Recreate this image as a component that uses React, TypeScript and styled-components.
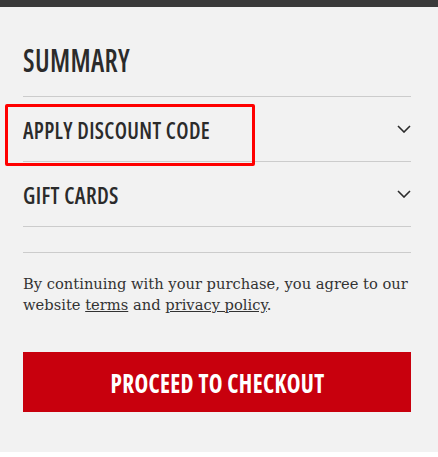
import React from "react";
import styled, { createGlobalStyle } from "styled-components";

const GlobalStyle = createGlobalStyle`
  html, body {
    margin: 0;
    padding: 0;
    background: #ffffff;
  }
`;

const condensed = `
  font-family: "Open Sans", "DejaVu Sans Condensed", sans-serif;
  font-stretch: 75%;
  font-weight: 600;
  letter-spacing: 0.4px;
  color: #2b2b2b;
`;

const Page = styled.div`
  box-sizing: border-box;
  width: 438px;
  height: 452px;
  background: #f2f2f2;
  border-top: 7px solid #3a3a3a;
  padding: 0 27px 0 23px;
  display: flex;
  flex-direction: column;
`;

// DIN-like narrow caps: squeeze the condensed face a little more
const Squeeze = styled.span<{ $scale: number; $origin?: string }>`
  display: inline-block;
  white-space: nowrap;
  transform: scaleX(${(p) => p.$scale});
  transform-origin: ${(p) => p.$origin || "left"} center;
`;

const Heading = styled.h2`
  ${condensed}
  margin: 0;
  padding-top: 35px;
  height: 54px;
  font-size: 32px;
  line-height: 36px;
  border-bottom: 1px solid #cccccc;
  box-sizing: content-box;
`;

const Row = styled.div`
  position: relative;
  height: 64px;
  display: flex;
  align-items: center;
  justify-content: space-between;
  border-bottom: 1px solid #cccccc;
`;

const RowTitle = styled.span`
  ${condensed}
  font-size: 24px;
  line-height: 28px;
  padding-top: 2px;
`;

const Highlight = styled.div`
  position: absolute;
  left: -18px;
  top: 7px;
  width: 244px;
  height: 56px;
  border: 3px solid #ff0000;
  border-radius: 2px;
  pointer-events: none;
`;

const Spacer = styled.div`
  height: 25px;
  border-bottom: 1px solid #cccccc;
`;

const Terms = styled.p`
  margin: 20px 0 0;
  font-family: "DejaVu Serif", serif;
  font-size: 14.7px;
  line-height: 21px;
  color: #333333;

  a {
    color: inherit;
    text-decoration: underline;
  }
`;

const CheckoutButton = styled.button`
  ${condensed}
  margin-top: 37px;
  height: 60px;
  width: 100%;
  border: none;
  background: #c8000d;
  color: #ffffff;
  font-weight: 700;
  font-size: 27px;
  cursor: pointer;
`;

const Chevron = () => (
  <svg width="14" height="8" viewBox="0 0 14 8" fill="none">
    <path d="M1 1l6 6 6-6" stroke="#2b2b2b" strokeWidth="1.6" />
  </svg>
);

export default function App() {
  return (
    <>
      <GlobalStyle />
      <Page>
        <Heading>
          <Squeeze $scale={0.85}>SUMMARY</Squeeze>
        </Heading>
        <Row>
          <RowTitle>
            <Squeeze $scale={0.9}>APPLY DISCOUNT CODE</Squeeze>
          </RowTitle>
          <Chevron />
          <Highlight />
        </Row>
        <Row>
          <RowTitle>
            <Squeeze $scale={0.92}>GIFT CARDS</Squeeze>
          </RowTitle>
          <Chevron />
        </Row>
        <Spacer />
        <Terms>
          By continuing with your purchase, you agree to our website{" "}
          <a href="#">terms</a> and <a href="#">privacy policy</a>.
        </Terms>
        <CheckoutButton>
          <Squeeze $scale={0.86} $origin="center">
            PROCEED TO CHECKOUT
          </Squeeze>
        </CheckoutButton>
      </Page>
    </>
  );
}
